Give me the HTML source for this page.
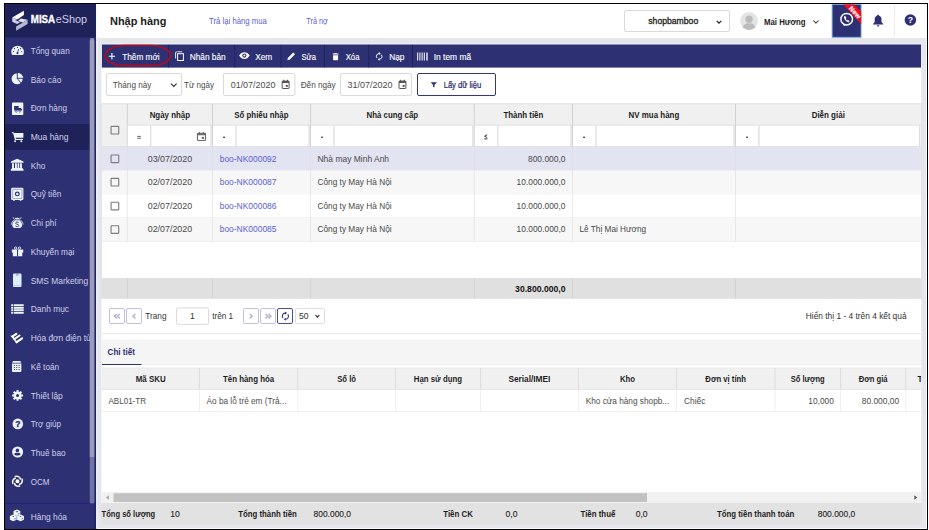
<!DOCTYPE html>
<html lang="vi"><head><meta charset="utf-8"><title>Nhập hàng - MISA eShop</title>
<style>
html,body{margin:0;padding:0;background:#fff;}
body{width:929px;height:530px;overflow:hidden;position:relative;font-family:"Liberation Sans",sans-serif;}
#app{position:absolute;left:0;top:0;width:929px;height:530px;overflow:hidden;background:#fff;}
#app span.t,#app svg.L{position:absolute;left:0;top:0;}
#app svg.L{left:0;top:0;overflow:hidden;pointer-events:none;}
span.t{white-space:nowrap;display:block;height:14px;line-height:14px;transform-origin:0 0;}
</style></head>
<body><div id="app">
<svg class="L" width="929" height="530" viewBox="0 0 929 530">
<rect x="4" y="3" width="924" height="527" fill="#000"/>
<rect x="5" y="4" width="922" height="525" fill="#fafbfd"/>
<rect x="5" y="4" width="921" height="524" fill="#e5e6eb"/>
<rect x="5" y="4" width="91.1" height="525" fill="#2d3073"/>
<rect x="5" y="4" width="91.1" height="33.5" fill="#1f2259"/>
<rect x="5" y="124.1" width="89.5" height="25.7" fill="#1f2259"/>
<rect x="89.9" y="38.2" width="4.6" height="465.1" fill="#7173a3"/>
<path d="M89.900 457V40.800L92 38.200h0.600L94.500 40.800V457z" fill="#9b9cb9"/>
<rect x="5" y="502.9" width="91.1" height="0.9" fill="#2a1f86"/>
<g transform="translate(11.5,10.5)"><polygon points="12.4,0.2 0.7,7.1 5.8,9 12.4,4.400" fill="#ffffff"/>
<polygon points="0.7,7.1 0.7,11.2 5.6,13.4 8.6,11.8 3.6,9.6 5.8,9" fill="#cfd0e2"/>
<polygon points="9.2,7.900 16.100,9.300 11.200,12 6.500,10.400" fill="#dedfea"/>
<polygon points="16.100,9.300 16.100,13.400 4.600,20.300 4.600,16.100" fill="#b7b8d2"/></g>
</svg>
<span class="t" style="font-size:10.5px;color:#fff;font-weight:700;-webkit-text-stroke:0.3px #fff;transform:translate(30.80px,12.40px) rotate(0.02deg) scaleX(0.9257);">MISA</span>
<span class="t" style="font-size:11.3px;color:#cfd0e4;transform:translate(55.70px,12.40px) rotate(0.02deg) scaleX(0.9609);">eShop</span>
<svg class="L" width="929" height="530" viewBox="0 0 929 530">
<g transform="translate(11.3,45.7)"><path d="M1 9.400C0.400 8.500 0 7.500 0 6.300A6.300 6.300 0 0 1 12.600 6.300C12.600 7.500 12.200 8.500 11.600 9.400z" fill="#eef5fd"/><circle cx="6.200" cy="7.400" r="1.050" fill="#2d3073"/><path d="M6.100 7.300L7.300 3.700" stroke="#2d3073" stroke-width="0.800" stroke-linecap="round"/><circle cx="6.200" cy="1.700" r="0.600" fill="#2d3073"/><circle cx="3.200" cy="3" r="0.600" fill="#2d3073"/><circle cx="9.300" cy="3" r="0.600" fill="#2d3073"/><circle cx="2.100" cy="5.900" r="0.600" fill="#2d3073"/><circle cx="10.400" cy="5.900" r="0.600" fill="#2d3073"/></g>
</svg>
<span class="t" style="font-size:8.6px;color:#cfd1e8;transform:translate(30.70px,43.88px) rotate(0.02deg) scaleX(0.9483);">Tổng quan</span>
<svg class="L" width="929" height="530" viewBox="0 0 929 530">
<g transform="translate(11.3,72.8)"><circle cx="5.800" cy="6" r="5.500" fill="#eef5fd"/><path d="M6.300 0.200A5.700 5.700 0 0 1 12 5.400H6.300z" fill="#eef5fd"/><path d="M6 0v6M6 5.500h6.200M6 5.800l3.800 4.400" stroke="#2d3073" stroke-width="0.950" fill="none"/></g>
</svg>
<span class="t" style="font-size:8.6px;color:#cfd1e8;transform:translate(30.70px,72.60px) rotate(0.02deg) scaleX(0.9696);">Báo cáo</span>
<svg class="L" width="929" height="530" viewBox="0 0 929 530">
<g transform="translate(12,102.5)"><rect x="0" y="0" width="11.300" height="12.500" rx="0.900" fill="#eef5fd"/><path d="M2.100 3.600h4.600v4.400H2.100zM6.700 5.400h2.200l1.100 1.300v1.300H6.700z" fill="#2d3073"/><circle cx="4.300" cy="8.900" r="0.900" fill="#eef5fd" stroke="#2d3073" stroke-width="0.600"/><circle cx="7.800" cy="8.900" r="0.900" fill="#eef5fd" stroke="#2d3073" stroke-width="0.600"/></g>
</svg>
<span class="t" style="font-size:8.6px;color:#cfd1e8;transform:translate(30.70px,101.32px) rotate(0.02deg) scaleX(0.9514);">Đơn hàng</span>
<svg class="L" width="929" height="530" viewBox="0 0 929 530">
<g transform="translate(11.8,131.9)"><path d="M0.100 0.200l1.900 0.500 0.500 0.500h9.100v4.700H3.900l0.300 1.200h6.900v1H3.100L1.400 1.500 0 1z" fill="#eef5fd"/><path d="M4.200 6.800h6.800v1.400H3.600z" fill="#eef5fd" opacity="0.500"/><circle cx="3.300" cy="9.300" r="1" fill="#eef5fd"/><circle cx="9.500" cy="9.300" r="1" fill="#eef5fd"/></g>
</svg>
<span class="t" style="font-size:8.6px;color:#cfd1e8;transform:translate(30.70px,130.04px) rotate(0.02deg) scaleX(0.9908);">Mua hàng</span>
<svg class="L" width="929" height="530" viewBox="0 0 929 530">
<g transform="translate(10.7,158.6)"><path d="M6.500 0.100L0.200 3v1.200h12.600V3z" fill="#eef5fd"/><path d="M1.300 4.600h1.900v5H1.300zM4.300 4.600h1.900v5H4.300zM6.900 4.600h1.700v5H6.900zM9.400 4.600h1.800v5H9.400z" fill="#eef5fd"/><path d="M1 9.500h11v0.900H1zM0.200 10.500h12.600v1.700H0.200z" fill="#eef5fd"/></g>
</svg>
<span class="t" style="font-size:8.6px;color:#cfd1e8;transform:translate(30.70px,158.76px) rotate(0.02deg) scaleX(0.9541);">Kho</span>
<svg class="L" width="929" height="530" viewBox="0 0 929 530">
<g transform="translate(11.1,187.8)"><rect x="0" y="0" width="12.300" height="12.300" rx="1.300" fill="#eef5fd"/><rect x="1.600" y="1.500" width="9.200" height="9.200" rx="0.400" fill="none" stroke="#2d3073" stroke-width="0.450" opacity="0.850"/><circle cx="6.200" cy="6.100" r="1.850" fill="none" stroke="#2d3073" stroke-width="1.200"/><path d="M2 12.200h1.700v0.800H2zM8.600 12.200h1.700v0.800H8.600z" fill="#eef5fd"/></g>
</svg>
<span class="t" style="font-size:8.6px;color:#cfd1e8;transform:translate(30.70px,187.48px) rotate(0.02deg) scaleX(0.9554);">Quỹ tiền</span>
<svg class="L" width="929" height="530" viewBox="0 0 929 530">
<g transform="translate(11.1,216.8)"><path d="M4.200 3.300h3.900c1.800 1.300 2.900 3.200 2.900 5 0 1.900-1.200 3-2.700 3H3.900c-1.500 0-2.700-1.100-2.700-3 0-1.800 1.100-3.700 3-5z" fill="#eef5fd"/><path d="M3.700 0.700l1.300 0.700 1.200-0.800 1.200 0.800 1.300-0.700-0.700 2.100H4.400z" fill="#eef5fd"/><path d="M2.100 0.400l0.500 1.500 1.300 0.900M10.100 0.400L9.600 1.900l-1.300 0.900" stroke="#eef5fd" stroke-width="0.700" fill="none"/><path d="M2.600 3.500C1.200 4.800 0.500 6.300 0.300 7.800M9.700 3.500c1.400 1.300 2.100 2.800 2.300 4.300" stroke="#eef5fd" stroke-width="0.900" fill="none"/><path d="M7.600 6c-0.500-0.500-1-0.700-1.600-0.700-0.900 0-1.500 0.400-1.500 1.100 0 1.500 3.200 0.700 3.200 2.300 0 0.700-0.700 1.100-1.600 1.100-0.700 0-1.300-0.300-1.800-0.800" stroke="#2d3073" stroke-width="0.900" fill="none"/><path d="M4.200 3.900h3.800" stroke="#2d3073" stroke-width="0.500" opacity="0.600"/></g>
</svg>
<span class="t" style="font-size:8.6px;color:#cfd1e8;transform:translate(30.70px,216.20px) rotate(0.02deg) scaleX(0.9505);">Chi phí</span>
<svg class="L" width="929" height="530" viewBox="0 0 929 530">
<g transform="translate(11.85,246.5)"><path d="M0 2.900h11.400v3H0zM1 5.900h9.400v3.800H1z" fill="#eef5fd"/><path d="M5.200 3.300h1v6.400h-1z" fill="#2d3073"/><circle cx="3.800" cy="1.600" r="1.150" fill="none" stroke="#eef5fd" stroke-width="0.850"/><circle cx="7.600" cy="1.600" r="1.150" fill="none" stroke="#eef5fd" stroke-width="0.850"/></g>
</svg>
<span class="t" style="font-size:8.6px;color:#cfd1e8;transform:translate(30.70px,244.92px) rotate(0.02deg) scaleX(0.9644);">Khuyến mại</span>
<svg class="L" width="929" height="530" viewBox="0 0 929 530">
<g transform="translate(13,273.6)"><rect x="0" y="0" width="8.500" height="13.400" rx="1.100" fill="#dfeefb"/><path d="M2.600 0.700h3.300l-0.500 1.100H3.100z" fill="#2d3073" opacity="0.450"/><path d="M0.300 11.600h7.900v0.500H0.300z" fill="#2d3073" opacity="0.300"/></g>
</svg>
<span class="t" style="font-size:8.6px;color:#cfd1e8;transform:translate(30.70px,273.64px) rotate(0.02deg) scaleX(0.9781);">SMS Marketing</span>
<svg class="L" width="929" height="530" viewBox="0 0 929 530">
<g transform="translate(10.9,303.9)"><path d="M0.300 0.300h2v2h-2zM3 0.300h9.800v2H3zM0.300 3.100h2v1.700h-2zM3 3.100h9.800v1.700H3zM0.300 5.300h2V7h-2zM3 5.300h9.800V7H3zM0.300 7.800h2v2h-2zM3 7.800h9.800v2H3z" fill="#eef5fd"/><path d="M3 4.800h9.800v0.500H3z" fill="#eef5fd" opacity="0.700"/></g>
</svg>
<span class="t" style="font-size:8.6px;color:#cfd1e8;transform:translate(30.70px,302.36px) rotate(0.02deg) scaleX(0.9797);">Danh mục</span>
<svg class="L" width="929" height="530" viewBox="0 0 929 530">
<g transform="translate(10,332.7)"><path d="M2.700 3.600L6.300 1.100M4.500 6.300L9.500 2.800M6.600 9.500L12.100 5.600" stroke="#ffffff" stroke-width="2.100" stroke-linecap="round" fill="none"/><path d="M0.200 2.700L2.600 3l1.200 1.600-1.300 0.900z" fill="#ffffff"/><path d="M2.800 4.600l2.500 3.200 1.900 2.400" stroke="#ffffff" stroke-width="1.600" fill="none"/></g>
</svg>
<span class="t" style="font-size:8.6px;color:#cfd1e8;transform:translate(30.70px,331.08px) rotate(0.02deg) scaleX(0.9751);">Hóa đơn điện tử</span>
<svg class="L" width="929" height="530" viewBox="0 0 929 530">
<g transform="translate(11.85,360.8)"><path d="M1.300 0.300h7.100L9.500 2H0.200z" fill="#eef5fd"/><path d="M0.200 2.600h9.300v7.600c0 0.600-0.500 1.100-1.100 1.100H1.300c-0.600 0-1.100-0.500-1.100-1.100z" fill="#eef5fd"/><path d="M2 4.300h1.100v0.900H2zM4.400 4.300h1.100v0.900H4.400zM6.700 4.300h1.100v0.900H6.700zM2 6.300h1.100v0.900H2zM4.400 6.300h1.100v0.900H4.400zM6.700 6.300h1.100v0.900H6.700zM2 8.300h1.100v0.900H2zM4.400 8.300h1.100v0.900H4.400zM6.700 8.300h1.100v0.900H6.700z" fill="#2d3073" opacity="0.850"/></g>
</svg>
<span class="t" style="font-size:8.6px;color:#cfd1e8;transform:translate(30.70px,359.80px) rotate(0.02deg) scaleX(0.9613);">Kế toán</span>
<svg class="L" width="929" height="530" viewBox="0 0 929 530">
<g transform="translate(11.85,390)"><circle cx="5.700" cy="5.450" r="3.900" fill="#eef5fd"/><g stroke="#eef5fd" stroke-width="2" fill="none"><path d="M5.700 0.100v10.700M0.200 5.450h11M1.800 1.700l7.800 7.500M9.600 1.700L1.800 9.200"/></g><circle cx="5.700" cy="5.450" r="1.500" fill="#2d3073"/></g>
</svg>
<span class="t" style="font-size:8.6px;color:#cfd1e8;transform:translate(30.70px,388.52px) rotate(0.02deg) scaleX(0.9731);">Thiết lập</span>
<svg class="L" width="929" height="530" viewBox="0 0 929 530">
<g transform="translate(12.4,418.6)"><circle cx="5.400" cy="5.300" r="5.300" fill="#eef5fd"/><text x="5.500" y="8.400" font-size="8.600" font-weight="700" text-anchor="middle" fill="#2d3073" stroke="#2d3073" stroke-width="0.350" font-family="Liberation Sans, sans-serif">?</text></g>
</svg>
<span class="t" style="font-size:8.6px;color:#cfd1e8;transform:translate(30.70px,417.24px) rotate(0.02deg) scaleX(0.9443);">Trợ giúp</span>
<svg class="L" width="929" height="530" viewBox="0 0 929 530">
<g transform="translate(12,446.5)"><circle cx="5.600" cy="5.500" r="5.500" fill="#eef5fd"/><circle cx="5.400" cy="3.900" r="1.800" fill="#2d3073"/><path d="M2.200 7.900c0-1.300 1.500-1.700 3.200-1.700s3.200 0.400 3.200 1.700c-0.800 0.800-1.900 1.100-3.200 1.100s-2.400-0.300-3.200-1.100z" fill="#2d3073"/></g>
</svg>
<span class="t" style="font-size:8.6px;color:#cfd1e8;transform:translate(30.70px,445.96px) rotate(0.02deg) scaleX(0.9603);">Thuê bao</span>
<svg class="L" width="929" height="530" viewBox="0 0 929 530">
<g transform="translate(11.7,475.6)"><circle cx="5.750" cy="5.650" r="1.900" fill="#ffffff"/><g fill="none" stroke="#ffffff" stroke-width="1.500" stroke-linecap="round"><path d="M3.600 0.900C6 0.200 8.200 1.300 8.700 3.400"/><path d="M10.400 3.500C11.100 5.900 10 8.100 7.900 8.600"/><path d="M7.900 10.400C5.500 11.100 3.300 10 2.800 7.900"/><path d="M1.100 7.800C0.400 5.400 1.500 3.200 3.600 2.700"/></g></g>
</svg>
<span class="t" style="font-size:8.6px;color:#cfd1e8;transform:translate(30.70px,474.68px) rotate(0.02deg) scaleX(0.9370);">OCM</span>
<svg class="L" width="929" height="530" viewBox="0 0 929 530">
<g transform="translate(9.6,509.2)"><path d="M7.300 0.300l3.400 1.400v3.600L7.300 6.700 3.900 5.300V1.700z" fill="#eef5fd"/><path d="M3.700 5.300l3.400 1.400v3.800l-3.400 1.500-3.400-1.500V6.700z" fill="#eef5fd"/><path d="M10.900 5.300l3.400 1.400v3.800l-3.400 1.500-3.400-1.500V6.700z" fill="#eef5fd"/><path d="M6.100 2.100l1.300 1.100 1.300-1.100zM2.600 6.900l1.100 0.900 1.100-0.900zM9.800 6.900l1.100 0.900 1.100-0.900z" fill="#2d3073"/><path d="M8.700 4.200l1-0.500v1l-1 0.500zM4.900 9.400l1-0.500v1l-1 0.500zM12.100 9.400l1-0.500v1l-1 0.500z" fill="#2d3073"/></g>
</svg>
<span class="t" style="font-size:8.6px;color:#cfd1e8;transform:translate(30.70px,510.08px) rotate(0.02deg) scaleX(0.9732);">Hàng hóa</span>
<svg class="L" width="929" height="530" viewBox="0 0 929 530">
<rect x="89.9" y="38.2" width="4.6" height="465.1" fill="#7173a3"/>
<path d="M89.900 457V40.800L92 38.200h0.600L94.500 40.800V457z" fill="#9b9cb9"/>
<rect x="94.5" y="37.8" width="1.6" height="491.2" fill="#21236a"/>
<rect x="96.1" y="4" width="829.9" height="33.9" fill="#fff"/>
<rect x="96.1" y="37.9" width="1.4" height="490.1" fill="#f1f2f6"/>
</svg>
<span class="t" style="font-size:11.8px;color:#1c1c1c;font-weight:700;transform:translate(110.00px,14.40px) rotate(0.02deg) scaleX(0.9267);">Nhập hàng</span>
<span class="t" style="font-size:8.4px;color:#5a5ed4;transform:translate(209.00px,13.90px) rotate(0.02deg) scaleX(0.9247);">Trả lại hàng mua</span>
<span class="t" style="font-size:8.4px;color:#5a5ed4;transform:translate(306.30px,13.90px) rotate(0.02deg) scaleX(0.8668);">Trả nợ</span>
<svg class="L" width="929" height="530" viewBox="0 0 929 530">
<rect x="624.5" y="10.5" width="105" height="21" rx="1.5" fill="#fff" stroke="#d9d9d9" stroke-width="1"/>
</svg>
<span class="t" style="font-size:8.7px;color:#222;-webkit-text-stroke:0.3px #222;transform:translate(648.30px,14.41px) rotate(0.02deg) scaleX(0.9939);">shopbamboo</span>
<svg class="L" width="929" height="530" viewBox="0 0 929 530">
<g transform="translate(715.5,19.6)"><path d="M1.200 1.200L3.500 3.500 5.800 1.200" fill="none" stroke="#222" stroke-width="1.200"/></g>
<g transform="translate(740,11.9)"><defs><clipPath id="av"><circle cx="9.100" cy="9.100" r="9"/></clipPath></defs><circle cx="9.100" cy="9.100" r="9" fill="#e4e4e4"/><g clip-path="url(#av)"><circle cx="9.100" cy="7.300" r="3.700" fill="#bcbcbc"/><path d="M2.400 18.200C2.400 13.300 5.200 11.400 9.100 11.400s6.700 1.900 6.700 6.800z" fill="#bcbcbc"/></g></g>
</svg>
<span class="t" style="font-size:8.7px;color:#1c1c1c;font-weight:700;transform:translate(764.00px,14.91px) rotate(0.02deg) scaleX(0.8982);">Mai Hương</span>
<svg class="L" width="929" height="530" viewBox="0 0 929 530">
<g transform="translate(812.4,19.5)"><path d="M0.900 1L3.500 3.600 6.100 1" fill="none" stroke="#333" stroke-width="1.050"/></g>
<rect x="832.15" y="4.45" width="28.9" height="32.8" fill="#2d3073" stroke="#6ea6e0" stroke-width="0.9"/>
<g transform="translate(831.7,4)"><polygon points="11.500,0.500 22.500,0.500 29.500,7.800 29.500,20.300" fill="#f5081c"/>
<text transform="translate(23.300,8.300) rotate(47)" x="0" y="2.300" font-size="6.600" font-weight="700" fill="#fff" stroke="#fff" stroke-width="0.200" letter-spacing="0.150" font-family="Liberation Sans, sans-serif" text-anchor="middle">New</text>
<circle cx="15" cy="15.200" r="5.800" fill="none" stroke="#fff" stroke-width="1.450"/>
<path d="M11.200 19.400l0.900 2.700 2.500-1.400z" fill="#fff"/>
<path d="M12.800 12c-0.900 0.700-0.600 2.400 0.700 4.100 1.300 1.700 2.900 2.500 3.900 1.900l0.400-0.700-1.400-1.300-0.900 0.500c-0.600-0.400-1.200-1.100-1.500-1.800l0.700-0.600-0.900-1.900z" fill="#fff"/></g>
<g transform="translate(872.6,14.5)"><path d="M5.500 0.300c0.600 0 1 0.400 1 1 1.500 0.500 2.400 1.800 2.400 3.600v2.700l1.700 1.800v0.500H0.400v-0.500l1.700-1.800V4.900c0-1.800 0.900-3.100 2.400-3.600 0-0.600 0.400-1 1-1z" fill="#2d3073"/><path d="M4.300 10.700h2.400c0 0.800-0.500 1.400-1.200 1.400s-1.200-0.600-1.200-1.400z" fill="#2d3073"/></g>
<rect x="894.3" y="4" width="0.7" height="33.6" fill="#e4e4e4"/>
<g transform="translate(904.6,14.2)"><circle cx="5.800" cy="5.800" r="5.800" fill="#2d3073"/><text x="5.900" y="9" font-size="8.800" font-weight="700" text-anchor="middle" fill="#fff" font-family="Liberation Sans, sans-serif">?</text></g>
<rect x="101.1" y="43.5" width="820.7" height="459.6" fill="#f4f5f8"/>
<rect x="101.9" y="44.5" width="819.2" height="458.6" fill="#fff"/>
<rect x="101.9" y="44.5" width="819.2" height="23.1" fill="#2d3073"/>
<rect x="168.25" y="44.8" width="0.9" height="22.6" fill="#1f2160"/>
<rect x="234.25" y="44.8" width="0.9" height="22.6" fill="#1f2160"/>
<rect x="280.55" y="44.8" width="0.9" height="22.6" fill="#1f2160"/>
<rect x="323.95" y="44.8" width="0.9" height="22.6" fill="#1f2160"/>
<rect x="368.25" y="44.8" width="0.9" height="22.6" fill="#1f2160"/>
<rect x="412.05" y="44.8" width="0.9" height="22.6" fill="#1f2160"/>
<g transform="translate(108.6,53)"><path d="M3.300 0.100v6.400M0.100 3.300h6.400" stroke="#fff" stroke-width="1.100"/></g>
</svg>
<span class="t" style="font-size:8.7px;color:#fff;-webkit-text-stroke:0.12px #fff;transform:translate(122.20px,49.61px) rotate(0.02deg) scaleX(0.9484);">Thêm mới</span>
<svg class="L" width="929" height="530" viewBox="0 0 929 530">
<g transform="translate(174.6,51.1)"><path d="M2.800 0.700h4.800" stroke="#fff" stroke-width="0.900" fill="none"/><path d="M1 7.400V1.200" stroke="#fff" stroke-width="0.900" fill="none"/><path d="M1 1.200l1.500-0.600" stroke="#fff" stroke-width="0.800"/><rect x="3" y="2.600" width="5.800" height="6.800" fill="none" stroke="#fff" stroke-width="1"/></g>
</svg>
<span class="t" style="font-size:8.7px;color:#fff;-webkit-text-stroke:0.12px #fff;transform:translate(189.70px,49.61px) rotate(0.02deg) scaleX(0.9541);">Nhân bản</span>
<svg class="L" width="929" height="530" viewBox="0 0 929 530">
<g transform="translate(239.1,52)"><path d="M0 3.600C1.500 1.100 3.300 0.200 5.300 0.200s3.800 0.900 5.300 3.400C9.100 6.100 7.300 7 5.300 7S1.500 6.100 0 3.600z" fill="#fff"/><circle cx="5.300" cy="3.600" r="2.100" fill="#2d3073"/><circle cx="5.300" cy="3.600" r="1" fill="#fff"/></g>
</svg>
<span class="t" style="font-size:8.7px;color:#fff;-webkit-text-stroke:0.12px #fff;transform:translate(255.20px,49.61px) rotate(0.02deg) scaleX(0.9503);">Xem</span>
<svg class="L" width="929" height="530" viewBox="0 0 929 530">
<g transform="translate(287,51.9)"><path d="M0.400 8.200l0.400-2.200 5.400-5.400 1.800 1.800-5.400 5.400z" fill="#fff"/></g>
</svg>
<span class="t" style="font-size:8.7px;color:#fff;-webkit-text-stroke:0.12px #fff;transform:translate(301.50px,49.61px) rotate(0.02deg) scaleX(0.8806);">Sửa</span>
<svg class="L" width="929" height="530" viewBox="0 0 929 530">
<g transform="translate(332.5,52.9)"><path d="M0.200 0.700h1.700l0.400-0.500h1.600l0.400 0.500h1.700v1H0.200z" fill="#fff"/><path d="M0.600 2.300h5v4.300c0 0.400-0.300 0.700-0.700 0.700H1.300c-0.400 0-0.700-0.300-0.700-0.700z" fill="#fff"/></g>
</svg>
<span class="t" style="font-size:8.7px;color:#fff;-webkit-text-stroke:0.12px #fff;transform:translate(345.70px,49.61px) rotate(0.02deg) scaleX(0.8914);">Xóa</span>
<svg class="L" width="929" height="530" viewBox="0 0 929 530">
<g transform="translate(375.7,52.1)"><path d="M3.500 1.400A2.800 2.800 0 0 0 1.300 5.900" fill="none" stroke="#fff" stroke-width="1"/><path d="M3.500 7.200A2.800 2.800 0 0 0 5.700 2.700" fill="none" stroke="#fff" stroke-width="1"/><path d="M3.200 0l1.800 1.400-1.800 1.400zM3.800 8.600l-1.800-1.400 1.800-1.400z" fill="#fff"/></g>
</svg>
<span class="t" style="font-size:8.7px;color:#fff;-webkit-text-stroke:0.12px #fff;transform:translate(389.20px,49.61px) rotate(0.02deg) scaleX(0.9586);">Nạp</span>
<svg class="L" width="929" height="530" viewBox="0 0 929 530">
<g transform="translate(417.1,52.5)"><path d="M0.600 0v8M2.800 0v8M5 0v8M7.200 0v8" stroke="#fff" stroke-width="1"/><path d="M9.900 0v8" stroke="#fff" stroke-width="1.300"/></g>
</svg>
<span class="t" style="font-size:8.7px;color:#fff;-webkit-text-stroke:0.12px #fff;transform:translate(433.70px,49.61px) rotate(0.02deg) scaleX(0.9695);">In tem mã</span>
<svg class="L" width="929" height="530" viewBox="0 0 929 530">
<g transform="translate(103,44)"><rect x="2.200" y="1.500" width="65" height="20.200" rx="19" ry="10.100" fill="none" stroke="#b30d1d" stroke-width="1.700"/></g>
<rect x="106.5" y="73.5" width="75" height="22" rx="1.5" fill="#fff" stroke="#dadada" stroke-width="1"/>
</svg>
<span class="t" style="font-size:8.7px;color:#4a4a4a;transform:translate(112.70px,77.61px) rotate(0.02deg) scaleX(0.9437);">Tháng này</span>
<svg class="L" width="929" height="530" viewBox="0 0 929 530">
<g transform="translate(170.4,82.8)"><path d="M0.600 0.800L3.400 3.600 6.200 0.800" fill="none" stroke="#333" stroke-width="1.200"/></g>
</svg>
<span class="t" style="font-size:8.7px;color:#4a4a4a;transform:translate(184.00px,77.61px) rotate(0.02deg) scaleX(0.9253);">Từ ngày</span>
<svg class="L" width="929" height="530" viewBox="0 0 929 530">
<rect x="223.5" y="73.5" width="71.4" height="22" rx="1.5" fill="#fff" stroke="#dadada" stroke-width="1"/>
</svg>
<span class="t" style="font-size:8.7px;color:#4a4a4a;transform:translate(230.70px,77.91px) rotate(0.02deg) scaleX(1.0289);">01/07/2020</span>
<svg class="L" width="929" height="530" viewBox="0 0 929 530">
<g transform="translate(281.7,79.8)"><rect x="0.500" y="1.300" width="6.900" height="7.400" rx="0.500" fill="none" stroke="#555" stroke-width="1"/><path d="M0.500 1.300h6.900v1.900H0.500zM1.600 0h1v1.500h-1zM5.300 0h1v1.500h-1z" fill="#555"/><rect x="4.100" y="5.100" width="2" height="2" fill="#555"/></g>
</svg>
<span class="t" style="font-size:8.7px;color:#4a4a4a;transform:translate(300.70px,77.61px) rotate(0.02deg) scaleX(0.9398);">Đến ngày</span>
<svg class="L" width="929" height="530" viewBox="0 0 929 530">
<rect x="340.5" y="73.5" width="71" height="22" rx="1.5" fill="#fff" stroke="#dadada" stroke-width="1"/>
</svg>
<span class="t" style="font-size:8.7px;color:#4a4a4a;transform:translate(347.50px,77.91px) rotate(0.02deg) scaleX(1.0334);">31/07/2020</span>
<svg class="L" width="929" height="530" viewBox="0 0 929 530">
<g transform="translate(398.5,79.8)"><rect x="0.500" y="1.300" width="6.900" height="7.400" rx="0.500" fill="none" stroke="#555" stroke-width="1"/><path d="M0.500 1.300h6.900v1.900H0.500zM1.600 0h1v1.500h-1zM5.300 0h1v1.500h-1z" fill="#555"/><rect x="4.100" y="5.100" width="2" height="2" fill="#555"/></g>
<rect x="417.5" y="73.5" width="78" height="22" rx="1.5" fill="#fff" stroke="#33367a" stroke-width="1"/>
<g transform="translate(430.6,82)"><path d="M0.100 0.200h6.200L3.900 2.900v2.700l-1.400-0.900V2.900z" fill="#2d3073"/></g>
</svg>
<span class="t" style="font-size:8.5px;color:#23266a;-webkit-text-stroke:0.2px #23266a;transform:translate(443.70px,77.65px) rotate(0.02deg) scaleX(0.8912);">Lấy dữ liệu</span>
<svg class="L" width="929" height="530" viewBox="0 0 929 530">
<rect x="100.7" y="103.5" width="821.4" height="195.5" fill="#e0e0e0"/>
<rect x="101.9" y="104" width="819.2" height="195" fill="#fff"/>
<rect x="101.9" y="104" width="819.2" height="42.5" fill="#f0f0f0"/>
<rect x="101.9" y="103.5" width="819.2" height="0.8" fill="#e2e2e2"/>
<rect x="101.9" y="146.5" width="819.2" height="24.1" fill="#e2e4f2"/>
<rect x="101.9" y="170.2" width="819.2" height="0.7" fill="#ebebeb"/>
<rect x="101.9" y="170.6" width="819.2" height="23.8" fill="#f7f7f7"/>
<rect x="101.9" y="194" width="819.2" height="0.7" fill="#ebebeb"/>
<rect x="101.9" y="194.4" width="819.2" height="23.4" fill="#ffffff"/>
<rect x="101.9" y="217.4" width="819.2" height="0.7" fill="#ebebeb"/>
<rect x="101.9" y="217.8" width="819.2" height="23.8" fill="#f7f7f7"/>
<rect x="101.9" y="241.2" width="819.2" height="0.7" fill="#ebebeb"/>
<rect x="101.9" y="278" width="819.2" height="20.8" fill="#e0e0e0"/>
<rect x="126.85" y="104" width="0.9" height="42.5" fill="#cdcdcd"/>
<rect x="126.9" y="146.5" width="0.8" height="95.1" fill="#dcdcdc" opacity="0.75"/>
<rect x="126.9" y="278" width="0.8" height="20.8" fill="#cfcfcf"/>
<rect x="212.05" y="104" width="0.9" height="42.5" fill="#cdcdcd"/>
<rect x="212.1" y="146.5" width="0.8" height="95.1" fill="#dcdcdc" opacity="0.75"/>
<rect x="212.1" y="278" width="0.8" height="20.8" fill="#cfcfcf"/>
<rect x="310.05" y="104" width="0.9" height="42.5" fill="#cdcdcd"/>
<rect x="310.1" y="146.5" width="0.8" height="95.1" fill="#dcdcdc" opacity="0.75"/>
<rect x="310.1" y="278" width="0.8" height="20.8" fill="#cfcfcf"/>
<rect x="473.85" y="104" width="0.9" height="42.5" fill="#cdcdcd"/>
<rect x="473.9" y="146.5" width="0.8" height="95.1" fill="#dcdcdc" opacity="0.75"/>
<rect x="473.9" y="278" width="0.8" height="20.8" fill="#cfcfcf"/>
<rect x="572.05" y="104" width="0.9" height="42.5" fill="#cdcdcd"/>
<rect x="572.1" y="146.5" width="0.8" height="95.1" fill="#dcdcdc" opacity="0.75"/>
<rect x="572.1" y="278" width="0.8" height="20.8" fill="#cfcfcf"/>
<rect x="735.05" y="104" width="0.9" height="42.5" fill="#cdcdcd"/>
<rect x="735.1" y="146.5" width="0.8" height="95.1" fill="#dcdcdc" opacity="0.75"/>
<rect x="735.1" y="278" width="0.8" height="20.8" fill="#cfcfcf"/>
</svg>
<span class="t" style="font-size:8.4px;color:#1e1e1e;font-weight:700;transform:translate(149.65px,108.31px) rotate(0.02deg) scaleX(0.9432);">Ngày nhập</span>
<svg class="L" width="929" height="530" viewBox="0 0 929 530">
<rect x="127.8" y="125.2" width="22.4" height="21.3" fill="#fff"/>
<rect x="150.2" y="125.2" width="1.3" height="21.3" fill="#dddddd"/>
<rect x="151.5" y="125.2" width="59" height="21.3" fill="#fff"/>
<rect x="210.5" y="125.2" width="0.9" height="21.3" fill="#dbdbdb"/>
<rect x="127.3" y="124.7" width="85.2" height="0.9" fill="#dfdfdf"/>
<rect x="137.3" y="135.9" width="3.5" height="0.8" fill="#2f3b55"/>
<rect x="137.3" y="137.8" width="3.5" height="0.8" fill="#2f3b55"/>
</svg>
<span class="t" style="font-size:8.4px;color:#1e1e1e;font-weight:700;transform:translate(234.35px,108.31px) rotate(0.02deg) scaleX(0.9384);">Số phiếu nhập</span>
<svg class="L" width="929" height="530" viewBox="0 0 929 530">
<rect x="213" y="125.2" width="22.4" height="21.3" fill="#fff"/>
<rect x="235.4" y="125.2" width="1.3" height="21.3" fill="#dddddd"/>
<rect x="236.7" y="125.2" width="71.8" height="21.3" fill="#fff"/>
<rect x="308.5" y="125.2" width="0.9" height="21.3" fill="#dbdbdb"/>
<rect x="212.5" y="124.7" width="98" height="0.9" fill="#dfdfdf"/>
<rect x="223.2" y="136.4" width="1.7" height="1.7" rx="0.5" fill="#2a2c66"/>
</svg>
<span class="t" style="font-size:8.4px;color:#1e1e1e;font-weight:700;transform:translate(366.50px,108.31px) rotate(0.02deg) scaleX(0.9405);">Nhà cung cấp</span>
<svg class="L" width="929" height="530" viewBox="0 0 929 530">
<rect x="311" y="125.2" width="22.4" height="21.3" fill="#fff"/>
<rect x="333.4" y="125.2" width="1.3" height="21.3" fill="#dddddd"/>
<rect x="334.7" y="125.2" width="137.6" height="21.3" fill="#fff"/>
<rect x="472.3" y="125.2" width="0.9" height="21.3" fill="#dbdbdb"/>
<rect x="310.5" y="124.7" width="163.8" height="0.9" fill="#dfdfdf"/>
<rect x="321.2" y="136.4" width="1.7" height="1.7" rx="0.5" fill="#2a2c66"/>
</svg>
<span class="t" style="font-size:8.4px;color:#1e1e1e;font-weight:700;transform:translate(503.40px,108.31px) rotate(0.02deg) scaleX(0.9420);">Thành tiền</span>
<svg class="L" width="929" height="530" viewBox="0 0 929 530">
<rect x="474.8" y="125.2" width="22.4" height="21.3" fill="#fff"/>
<rect x="497.2" y="125.2" width="1.3" height="21.3" fill="#dddddd"/>
<rect x="498.5" y="125.2" width="72" height="21.3" fill="#fff"/>
<rect x="570.5" y="125.2" width="0.9" height="21.3" fill="#dbdbdb"/>
<rect x="474.3" y="124.7" width="98.2" height="0.9" fill="#dfdfdf"/>
<g transform="translate(483.7,134.4)"><path d="M3.500 0.400L0.900 1.800l2.600 1.400M0.700 4.500h3" fill="none" stroke="#222" stroke-width="0.900"/></g>
</svg>
<span class="t" style="font-size:8.4px;color:#1e1e1e;font-weight:700;transform:translate(628.60px,108.31px) rotate(0.02deg) scaleX(0.9465);">NV mua hàng</span>
<svg class="L" width="929" height="530" viewBox="0 0 929 530">
<rect x="573" y="125.2" width="22.4" height="21.3" fill="#fff"/>
<rect x="595.4" y="125.2" width="1.3" height="21.3" fill="#dddddd"/>
<rect x="596.7" y="125.2" width="136.8" height="21.3" fill="#fff"/>
<rect x="733.5" y="125.2" width="0.9" height="21.3" fill="#dbdbdb"/>
<rect x="572.5" y="124.7" width="163" height="0.9" fill="#dfdfdf"/>
<rect x="583.2" y="136.4" width="1.7" height="1.7" rx="0.5" fill="#2a2c66"/>
</svg>
<span class="t" style="font-size:8.4px;color:#1e1e1e;font-weight:700;transform:translate(811.65px,108.31px) rotate(0.02deg) scaleX(0.9512);">Diễn giải</span>
<svg class="L" width="929" height="530" viewBox="0 0 929 530">
<rect x="736" y="125.2" width="22.4" height="21.3" fill="#fff"/>
<rect x="758.4" y="125.2" width="1.3" height="21.3" fill="#dddddd"/>
<rect x="759.7" y="125.2" width="159.4" height="21.3" fill="#fff"/>
<rect x="919.1" y="125.2" width="0.9" height="21.3" fill="#dbdbdb"/>
<rect x="735.5" y="124.7" width="185.6" height="0.9" fill="#dfdfdf"/>
<rect x="746.2" y="136.4" width="1.7" height="1.7" rx="0.5" fill="#2a2c66"/>
<rect x="101.9" y="146.1" width="819.2" height="0.7" fill="#dcdcdc"/>
<g transform="translate(196.9,131.9)"><rect x="0.600" y="1.400" width="8" height="7.200" rx="0.700" fill="none" stroke="#6a6a6a" stroke-width="1.100"/><path d="M0.600 1.400h8v1.900H0.600zM2 0h1.100v1.600H2zM6 0h1.100v1.600H6z" fill="#6a6a6a"/><rect x="4.800" y="5" width="2.300" height="2" fill="#6a6a6a"/></g>
<rect x="111.08" y="126.37" width="7.65" height="7.65" rx="0.62" fill="none" stroke="#7d7d7d" stroke-width="1.15"/>
<rect x="111.08" y="154.97" width="7.65" height="7.65" rx="0.62" fill="none" stroke="#7d7d7d" stroke-width="1.15"/>
</svg>
<span class="t" style="font-size:8.4px;color:#484848;transform:translate(147.70px,151.51px) rotate(0.02deg) scaleX(1.0608);">03/07/2020</span>
<span class="t" style="font-size:8.5px;color:#5a5ed4;transform:translate(219.70px,151.55px) rotate(0.02deg) scaleX(0.9932);">boo-NK000092</span>
<span class="t" style="font-size:8.4px;color:#484848;transform:translate(317.50px,151.51px) rotate(0.02deg) scaleX(1.0117);">Nhà may Minh Anh</span>
<span class="t" style="font-size:8.4px;color:#484848;transform:translate(528.00px,151.51px) rotate(0.02deg) scaleX(1.0062);">800.000,0</span>
<svg class="L" width="929" height="530" viewBox="0 0 929 530">
<rect x="111.08" y="178.37" width="7.65" height="7.65" rx="0.62" fill="none" stroke="#7d7d7d" stroke-width="1.15"/>
</svg>
<span class="t" style="font-size:8.4px;color:#484848;transform:translate(147.70px,174.91px) rotate(0.02deg) scaleX(1.0608);">02/07/2020</span>
<span class="t" style="font-size:8.5px;color:#5a5ed4;transform:translate(219.70px,174.95px) rotate(0.02deg) scaleX(0.9932);">boo-NK000087</span>
<span class="t" style="font-size:8.4px;color:#484848;transform:translate(317.50px,174.91px) rotate(0.02deg) scaleX(0.9885);">Công ty May Hà Nội</span>
<span class="t" style="font-size:8.4px;color:#484848;transform:translate(516.60px,174.91px) rotate(0.02deg);">10.000.000,0</span>
<svg class="L" width="929" height="530" viewBox="0 0 929 530">
<rect x="111.08" y="202.27" width="7.65" height="7.65" rx="0.62" fill="none" stroke="#7d7d7d" stroke-width="1.15"/>
</svg>
<span class="t" style="font-size:8.4px;color:#484848;transform:translate(147.70px,198.71px) rotate(0.02deg) scaleX(1.0608);">02/07/2020</span>
<span class="t" style="font-size:8.5px;color:#5a5ed4;transform:translate(219.70px,198.75px) rotate(0.02deg) scaleX(0.9932);">boo-NK000086</span>
<span class="t" style="font-size:8.4px;color:#484848;transform:translate(317.50px,198.71px) rotate(0.02deg) scaleX(0.9885);">Công ty May Hà Nội</span>
<span class="t" style="font-size:8.4px;color:#484848;transform:translate(516.60px,198.71px) rotate(0.02deg);">10.000.000,0</span>
<svg class="L" width="929" height="530" viewBox="0 0 929 530">
<rect x="111.08" y="225.77" width="7.65" height="7.65" rx="0.62" fill="none" stroke="#7d7d7d" stroke-width="1.15"/>
</svg>
<span class="t" style="font-size:8.4px;color:#484848;transform:translate(147.70px,222.21px) rotate(0.02deg) scaleX(1.0608);">02/07/2020</span>
<span class="t" style="font-size:8.5px;color:#5a5ed4;transform:translate(219.70px,222.25px) rotate(0.02deg) scaleX(0.9932);">boo-NK000085</span>
<span class="t" style="font-size:8.4px;color:#484848;transform:translate(317.50px,222.21px) rotate(0.02deg) scaleX(0.9885);">Công ty May Hà Nội</span>
<span class="t" style="font-size:8.4px;color:#484848;transform:translate(516.60px,222.21px) rotate(0.02deg);">10.000.000,0</span>
<span class="t" style="font-size:8.4px;color:#484848;transform:translate(579.50px,222.21px) rotate(0.02deg) scaleX(0.9832);">Lê Thị Mai Hương</span>
<span class="t" style="font-size:8.6px;color:#111;font-weight:700;transform:translate(515.10px,281.78px) rotate(0.02deg) scaleX(1.0057);">30.800.000,0</span>
<svg class="L" width="929" height="530" viewBox="0 0 929 530">
<rect x="109.5" y="308.5" width="15" height="15" rx="1.5" fill="#fff" stroke="#bfc1de" stroke-width="1"/>
<rect x="126.5" y="308.5" width="15" height="15" rx="1.5" fill="#fff" stroke="#bfc1de" stroke-width="1"/>
<rect x="243.5" y="308.5" width="15" height="15" rx="1.5" fill="#fff" stroke="#bfc1de" stroke-width="1"/>
<rect x="260.5" y="308.5" width="15" height="15" rx="1.5" fill="#fff" stroke="#bfc1de" stroke-width="1"/>
<rect x="277.5" y="308.5" width="15" height="15" rx="1.5" fill="#fff" stroke="#4a4d95" stroke-width="1"/>
<g transform="translate(113.6,313.6)"><path d="M3.200 0.400L0.800 2.600l2.400 2.200M6.200 0.400L3.800 2.600l2.400 2.200" fill="none" stroke="#b1b3cf" stroke-width="1.450"/></g>
<g transform="translate(132,313.6)"><path d="M3.400 0.400L1 2.600l2.400 2.200" fill="none" stroke="#b1b3cf" stroke-width="1.450"/></g>
<g transform="translate(248.8,313.6)"><path d="M1 0.400l2.400 2.200L1 4.800" fill="none" stroke="#b1b3cf" stroke-width="1.450"/></g>
<g transform="translate(264.8,313.6)"><path d="M0.800 0.400l2.400 2.200-2.400 2.200M3.800 0.400l2.400 2.200-2.400 2.200" fill="none" stroke="#b1b3cf" stroke-width="1.450"/></g>
<g transform="translate(281.4,311.6)"><path d="M4 1.500A3 3 0 0 0 1.600 6.400" fill="none" stroke="#2d3073" stroke-width="1.100"/><path d="M4 7.700A3 3 0 0 0 6.400 2.800" fill="none" stroke="#2d3073" stroke-width="1.100"/><path d="M3.600 0l2 1.500-2 1.500zM4.400 9.200l-2-1.500 2-1.500z" fill="#2d3073"/></g>
</svg>
<span class="t" style="font-size:8.6px;color:#333;transform:translate(145.20px,309.18px) rotate(0.02deg) scaleX(0.9617);">Trang</span>
<svg class="L" width="929" height="530" viewBox="0 0 929 530">
<rect x="176.5" y="307.9" width="32" height="16.4" rx="1.5" fill="#fff" stroke="#dadada" stroke-width="1"/>
</svg>
<span class="t" style="font-size:8.6px;color:#333;transform:translate(190.01px,309.18px) rotate(0.02deg);">1</span>
<span class="t" style="font-size:8.6px;color:#333;transform:translate(212.20px,309.18px) rotate(0.02deg) scaleX(0.9549);">trên 1</span>
<svg class="L" width="929" height="530" viewBox="0 0 929 530">
<rect x="295.5" y="308.5" width="29" height="15" rx="1.5" fill="#fff" stroke="#e0e0e0" stroke-width="1"/>
</svg>
<span class="t" style="font-size:8.6px;color:#333;transform:translate(299.00px,309.18px) rotate(0.02deg);">50</span>
<svg class="L" width="929" height="530" viewBox="0 0 929 530">
<g transform="translate(314.4,314.2)"><path d="M1 0.800l2 2.200 2-2.200" fill="none" stroke="#222" stroke-width="1.100"/></g>
</svg>
<span class="t" style="font-size:8.6px;color:#333;transform:translate(805.80px,309.18px) rotate(0.02deg) scaleX(0.9717);">Hiển thị 1 - 4 trên 4 kết quả</span>
<svg class="L" width="929" height="530" viewBox="0 0 929 530">
<rect x="101.9" y="333.4" width="819.2" height="0.7" fill="#dcdcdc"/>
<rect x="101.9" y="339.6" width="819.2" height="25" fill="#f5f5f5"/>
</svg>
<span class="t" style="font-size:8.5px;color:#2d3073;font-weight:700;transform:translate(107.60px,344.75px) rotate(0.02deg) scaleX(0.9478);">Chi tiết</span>
<svg class="L" width="929" height="530" viewBox="0 0 929 530">
<rect x="101.9" y="364" width="39.7" height="1" fill="#2d3073"/>
<rect x="141.6" y="364.2" width="779.5" height="0.7" fill="#ededf3"/>
<rect x="101.9" y="368" width="819.2" height="21.3" fill="#f0f0f0"/>
<rect x="101.9" y="367.6" width="819.2" height="0.7" fill="#e4e4e4"/>
<rect x="101.9" y="389" width="819.2" height="0.7" fill="#dedede"/>
<rect x="101.9" y="411" width="819.2" height="0.7" fill="#e9e9e9"/>
<rect x="199.1" y="368" width="0.8" height="21.3" fill="#d9d9d9"/>
<rect x="199.1" y="389.3" width="0.8" height="21.9" fill="#ececec"/>
<rect x="297.4" y="368" width="0.8" height="21.3" fill="#d9d9d9"/>
<rect x="297.4" y="389.3" width="0.8" height="21.9" fill="#ececec"/>
<rect x="395.1" y="368" width="0.8" height="21.3" fill="#d9d9d9"/>
<rect x="395.1" y="389.3" width="0.8" height="21.9" fill="#ececec"/>
<rect x="480.1" y="368" width="0.8" height="21.3" fill="#d9d9d9"/>
<rect x="480.1" y="389.3" width="0.8" height="21.9" fill="#ececec"/>
<rect x="577.9" y="368" width="0.8" height="21.3" fill="#d9d9d9"/>
<rect x="577.9" y="389.3" width="0.8" height="21.9" fill="#ececec"/>
<rect x="676.1" y="368" width="0.8" height="21.3" fill="#d9d9d9"/>
<rect x="676.1" y="389.3" width="0.8" height="21.9" fill="#ececec"/>
<rect x="774.6" y="368" width="0.8" height="21.3" fill="#d9d9d9"/>
<rect x="774.6" y="389.3" width="0.8" height="21.9" fill="#ececec"/>
<rect x="840.1" y="368" width="0.8" height="21.3" fill="#d9d9d9"/>
<rect x="840.1" y="389.3" width="0.8" height="21.9" fill="#ececec"/>
<rect x="905.4" y="368" width="0.8" height="21.3" fill="#d9d9d9"/>
<rect x="905.4" y="389.3" width="0.8" height="21.9" fill="#ececec"/>
</svg>
<span class="t" style="font-size:8.4px;color:#1e1e1e;font-weight:700;transform:translate(135.70px,371.91px) rotate(0.02deg) scaleX(0.9452);">Mã SKU</span>
<span class="t" style="font-size:8.4px;color:#1e1e1e;font-weight:700;transform:translate(223.00px,371.91px) rotate(0.02deg) scaleX(0.9395);">Tên hàng hóa</span>
<span class="t" style="font-size:8.4px;color:#1e1e1e;font-weight:700;transform:translate(337.15px,371.91px) rotate(0.02deg) scaleX(0.9254);">Số lô</span>
<span class="t" style="font-size:8.4px;color:#1e1e1e;font-weight:700;transform:translate(413.75px,371.91px) rotate(0.02deg) scaleX(0.9360);">Hạn sử dụng</span>
<span class="t" style="font-size:8.4px;color:#1e1e1e;font-weight:700;transform:translate(508.40px,371.91px) rotate(0.02deg) scaleX(0.9886);">Serial/IMEI</span>
<span class="t" style="font-size:8.4px;color:#1e1e1e;font-weight:700;transform:translate(619.90px,371.91px) rotate(0.02deg) scaleX(0.9186);">Kho</span>
<span class="t" style="font-size:8.4px;color:#1e1e1e;font-weight:700;transform:translate(705.35px,371.91px) rotate(0.02deg) scaleX(0.9223);">Đơn vị tính</span>
<span class="t" style="font-size:8.4px;color:#1e1e1e;font-weight:700;transform:translate(790.75px,371.91px) rotate(0.02deg) scaleX(0.9014);">Số lượng</span>
<span class="t" style="font-size:8.4px;color:#1e1e1e;font-weight:700;transform:translate(858.65px,371.91px) rotate(0.02deg) scaleX(0.9166);">Đơn giá</span>
<span class="t" style="font-size:8.4px;color:#1e1e1e;font-weight:700;transform:translate(917.60px,371.91px) rotate(0.02deg);">T</span>
<span class="t" style="font-size:8.5px;color:#4c4c4c;transform:translate(108.50px,393.95px) rotate(0.02deg) scaleX(0.9450);">ABL01-TR</span>
<span class="t" style="font-size:8.5px;color:#4c4c4c;transform:translate(206.50px,393.95px) rotate(0.02deg) scaleX(0.9714);">Áo ba lỗ trẻ em (Trả...</span>
<span class="t" style="font-size:8.5px;color:#4c4c4c;transform:translate(585.70px,393.95px) rotate(0.02deg) scaleX(0.9706);">Kho cửa hàng shopb...</span>
<span class="t" style="font-size:8.5px;color:#4c4c4c;transform:translate(684.00px,393.95px) rotate(0.02deg) scaleX(0.9801);">Chiếc</span>
<span class="t" style="font-size:8.5px;color:#4c4c4c;transform:translate(808.30px,393.95px) rotate(0.02deg) scaleX(0.9808);">10,000</span>
<span class="t" style="font-size:8.5px;color:#4c4c4c;transform:translate(861.70px,393.95px) rotate(0.02deg) scaleX(0.9917);">80.000,00</span>
<svg class="L" width="929" height="530" viewBox="0 0 929 530">
<rect x="921.1" y="38" width="4.9" height="490" fill="#e5e6eb"/>
<rect x="921.1" y="43.5" width="0.7" height="459.6" fill="#eeeff3"/>
<rect x="921.1" y="103.5" width="1" height="195.5" fill="#e0e0e0"/>
<rect x="101.9" y="492" width="819.2" height="11.1" fill="#f1f1f1"/>
<rect x="113.5" y="493.2" width="533.5" height="8.7" fill="#c1c1c1"/>
<g transform="translate(105.6,495)"><path d="M3.200 0.200L0.400 2.500l2.800 2.300z" fill="#a3a3a3"/></g>
<g transform="translate(914,495)"><path d="M0.400 0.200l2.800 2.300-2.800 2.300z" fill="#505050"/></g>
<rect x="101.3" y="503.1" width="820.6" height="21.5" fill="#e2e2e2"/>
</svg>
<span class="t" style="font-size:8.4px;color:#1e1e1e;font-weight:700;transform:translate(101.60px,507.21px) rotate(0.02deg) scaleX(0.9020);">Tổng số lượng</span>
<span class="t" style="font-size:8.6px;color:#222;-webkit-text-stroke:0.1px #222;transform:translate(170.20px,507.28px) rotate(0.02deg);">10</span>
<span class="t" style="font-size:8.4px;color:#1e1e1e;font-weight:700;transform:translate(238.20px,507.21px) rotate(0.02deg) scaleX(0.9335);">Tổng thành tiền</span>
<span class="t" style="font-size:8.6px;color:#222;-webkit-text-stroke:0.1px #222;transform:translate(313.50px,507.28px) rotate(0.02deg) scaleX(0.9828);">800.000,0</span>
<span class="t" style="font-size:8.4px;color:#1e1e1e;font-weight:700;transform:translate(443.20px,507.21px) rotate(0.02deg) scaleX(0.9436);">Tiền CK</span>
<span class="t" style="font-size:8.6px;color:#222;-webkit-text-stroke:0.1px #222;transform:translate(505.50px,507.28px) rotate(0.02deg);">0,0</span>
<span class="t" style="font-size:8.4px;color:#1e1e1e;font-weight:700;transform:translate(580.50px,507.21px) rotate(0.02deg) scaleX(0.9413);">Tiền thuế</span>
<span class="t" style="font-size:8.6px;color:#222;-webkit-text-stroke:0.1px #222;transform:translate(635.70px,507.28px) rotate(0.02deg);">0,0</span>
<span class="t" style="font-size:8.4px;color:#1e1e1e;font-weight:700;transform:translate(717.00px,507.21px) rotate(0.02deg) scaleX(0.9331);">Tổng tiền thanh toán</span>
<span class="t" style="font-size:8.6px;color:#222;-webkit-text-stroke:0.1px #222;transform:translate(817.70px,507.28px) rotate(0.02deg) scaleX(0.9828);">800.000,0</span>
</div></body></html>
